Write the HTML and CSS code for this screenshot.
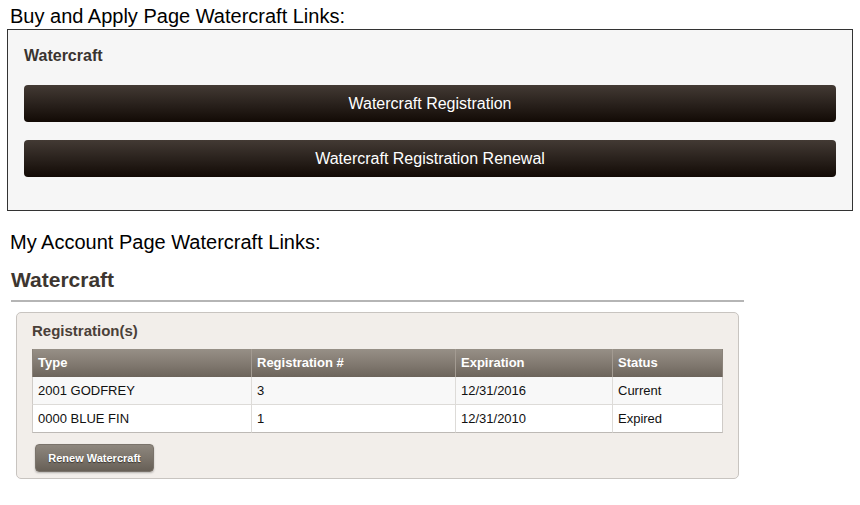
FILE: index.html
```html
<!DOCTYPE html>
<html lang="en">
<head>
    <meta charset="UTF-8">
    <meta name="viewport" content="width=device-width, initial-scale=1.0">
    <title>Watercraft Links</title>
    <link rel="stylesheet" href="styles.css">
</head>
<body>

<p class="intro">Buy and Apply Page Watercraft Links:</p>

<!-- Buy and Apply links -->
<div class="link-box">
    <h3 class="link-title">Watercraft</h3>
    <a class="dark-btn" href="#">Watercraft Registration</a>
    <a class="dark-btn" href="#">Watercraft Registration Renewal</a>
</div>

<p class="intro intro-second">My Account Page Watercraft Links:</p>

<!-- My Account section -->
<h2 class="section-title">Watercraft</h2>
<div class="section-rule"></div>

<div class="panel">
    <h4 class="panel-title">Registration(s)</h4>
    <table class="reg-table">
        <thead>
            <tr>
                <th class="col-type">Type</th>
                <th class="col-reg">Registration #</th>
                <th class="col-exp">Expiration</th>
                <th class="col-status">Status</th>
            </tr>
        </thead>
        <tbody>
            <tr class="odd">
                <td>2001 GODFREY</td>
                <td>3</td>
                <td>12/31/2016</td>
                <td>Current</td>
            </tr>
            <tr>
                <td>0000 BLUE FIN</td>
                <td>1</td>
                <td>12/31/2010</td>
                <td>Expired</td>
            </tr>
        </tbody>
    </table>
    <button class="renew-btn">Renew Watercraft</button>
</div>

</body>
</html>
```

FILE: styles.css
```css
* {
    box-sizing: border-box;
    margin: 0;
    padding: 0;
}

body {
    font-family: 'Liberation Sans', Arial, sans-serif;
    background-color: #fff;
    color: #000;
}

.intro {
    font-size: 20px;
    line-height: 23px;
    margin: 5px 0 1px 10px;
}

.intro-second {
    margin-top: 20px;
    margin-bottom: 0;
}

.link-box {
    margin: 0 7px 0 7px;
    border: 1px solid #333;
    background-color: #f6f6f6;
    padding: 17px 16px 33px;
}

.link-title {
    font-size: 16px;
    line-height: 18px;
    font-weight: bold;
    color: #3a3430;
    margin-bottom: 20px;
}

.dark-btn {
    display: block;
    height: 37px;
    line-height: 37px;
    text-align: center;
    font-size: 16px;
    color: #fff;
    text-decoration: none;
    border-radius: 4px;
    background: linear-gradient(to bottom, #433a34 0%, #2a221d 50%, #120a05 100%);
}

.dark-btn + .dark-btn {
    margin-top: 18px;
}

.section-title {
    font-size: 21px;
    line-height: 23px;
    font-weight: bold;
    color: #3d3630;
    margin: 14px 0 9px 11px;
}

.section-rule {
    width: 733px;
    height: 2px;
    margin-left: 11px;
    background-color: #b5b5b5;
}

.panel {
    width: 723px;
    margin: 10px 0 0 16px;
    background-color: #f2eeea;
    border: 1px solid #c8c4c0;
    border-radius: 5px;
    padding: 10px 15px 6px;
}

.panel-title {
    font-size: 15px;
    line-height: 16px;
    font-weight: bold;
    color: #4a4038;
    margin-bottom: 10px;
}

.reg-table {
    width: 691px;
    table-layout: fixed;
    border-collapse: separate;
    border-spacing: 0;
    font-size: 13px;
}

.reg-table th, .reg-table td {
    text-align: left;
    padding: 0 5px;
    white-space: nowrap;
}

.reg-table th {
    height: 28px;
    line-height: 28px;
    font-size: 13px;
    font-weight: bold;
    color: #fff;
    background: linear-gradient(to bottom, #979087 0%, #837b72 50%, #6c645b 100%);
    border-left: 1px solid #a39b92;
}

.reg-table th:first-child {
    border-left: 1px solid #8a8279;
}

.reg-table th:last-child {
    border-right: 1px solid #8a8279;
}

.col-type { width: 219px; }
.col-reg { width: 204px; }
.col-exp { width: 157px; }
.col-status { width: 111px; }

.reg-table td {
    height: 28px;
    line-height: 27px;
    color: #111;
    background-color: #fff;
    border-left: 1px solid #dddbd8;
    border-bottom: 1px solid #dddbd8;
}

.reg-table tr.odd td {
    background-color: #f8f8f8;
}

.reg-table td:first-child {
    border-left: 1px solid #cfcbc7;
}

.reg-table td:last-child {
    border-right: 1px solid #cfcbc7;
}

.reg-table tbody tr:last-child td {
    border-bottom: 1px solid #bdb9b5;
}

.renew-btn {
    display: block;
    width: 119px;
    height: 28px;
    margin: 11px 0 0 3px;
    font-family: 'Liberation Sans', Arial, sans-serif;
    font-size: 11px;
    font-weight: bold;
    color: #fff;
    text-shadow: 0 1px 1px rgba(0, 0, 0, 0.5);
    border: 1px solid #7a736b;
    border-radius: 4px;
    background: linear-gradient(to bottom, #8e877e 0%, #7b746b 50%, #675f56 100%);
    box-shadow: 0 1px 2px rgba(0, 0, 0, 0.25);
    cursor: pointer;
}
```
